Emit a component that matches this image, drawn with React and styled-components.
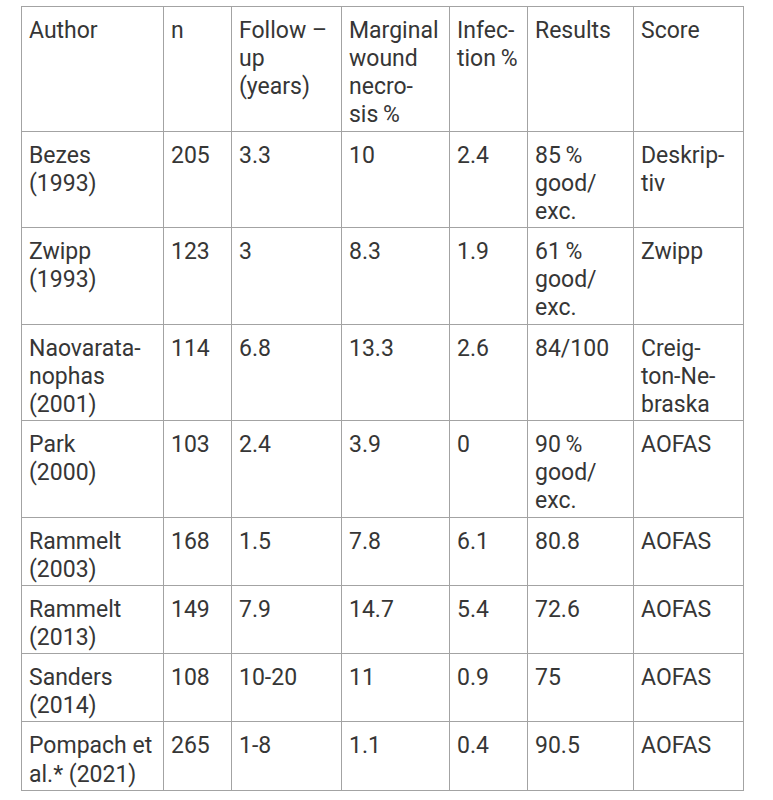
import React from "react";
import styled, { createGlobalStyle } from "styled-components";

const Global = createGlobalStyle`
  html, body { margin: 0; padding: 0; background: #ffffff; }
  body { font-family: Roboto, "Liberation Sans", Arial, sans-serif; }
`;

const Page = styled.div`
  padding: 6px 0 0 21px;
  width: 773px;
  box-sizing: border-box;
`;

const Table = styled.table`
  border-collapse: collapse;
  table-layout: fixed;
  width: 723px;
  color: #363636;
  font-family: Roboto, "Liberation Sans", Arial, sans-serif;
  font-size: 23px;
  line-height: 28.15px;
`;

const Cell = styled.td`
  border: 1px solid #a3a3a3;
  padding: 10px 3px 1px 7px;
  vertical-align: top;
  text-align: left;
  font-weight: 400;
  white-space: nowrap;
`;

const HeadCell = styled(Cell).attrs({ as: "th" })``;

const widths = [142, 68, 110, 108, 78, 106, 110];

const T = "\u2009";

const headers = [
  ["Author"],
  ["n"],
  ["Follow –", "up", "(years)"],
  ["Marginal", "wound", "necro-", `sis${T}%`],
  ["Infec-", `tion${T}%`],
  ["Results"],
  ["Score"],
];

const rows = [
  [["Bezes", "(1993)"], ["205"], ["3.3"], ["10"], ["2.4"], [`85${T}%`, "good/", "exc."], ["Deskrip-", "tiv"]],
  [["Zwipp", "(1993)"], ["123"], ["3"], ["8.3"], ["1.9"], [`61${T}%`, "good/", "exc."], ["Zwipp"]],
  [["Naovarata-", "nophas", "(2001)"], ["114"], ["6.8"], ["13.3"], ["2.6"], ["84/100"], ["Creig-", "ton-Ne-", "braska"]],
  [["Park", "(2000)"], ["103"], ["2.4"], ["3.9"], ["0"], [`90${T}%`, "good/", "exc."], ["AOFAS"]],
  [["Rammelt", "(2003)"], ["168"], ["1.5"], ["7.8"], ["6.1"], ["80.8"], ["AOFAS"]],
  [["Rammelt", "(2013)"], ["149"], ["7.9"], ["14.7"], ["5.4"], ["72.6"], ["AOFAS"]],
  [["Sanders", "(2014)"], ["108"], ["10-20"], ["11"], ["0.9"], ["75"], ["AOFAS"]],
  [["Pompach et", "al.* (2021)"], ["265"], ["1-8"], ["1.1"], ["0.4"], ["90.5"], ["AOFAS"]],
];

const Lines = ({ lines }) =>
  lines.map((l, i) => (
    <React.Fragment key={i}>
      {i > 0 && <br />}
      {l}
    </React.Fragment>
  ));

export default function App() {
  return (
    <>
      <Global />
      <Page>
        <Table>
          <colgroup>
            {widths.map((w, i) => (
              <col key={i} style={{ width: w }} />
            ))}
          </colgroup>
          <thead>
            <tr>
              {headers.map((h, i) => (
                <HeadCell key={i}>
                  <Lines lines={h} />
                </HeadCell>
              ))}
            </tr>
          </thead>
          <tbody>
            {rows.map((r, ri) => (
              <tr key={ri}>
                {r.map((c, ci) => (
                  <Cell key={ci}>
                    <Lines lines={c} />
                  </Cell>
                ))}
              </tr>
            ))}
          </tbody>
        </Table>
      </Page>
    </>
  );
}
